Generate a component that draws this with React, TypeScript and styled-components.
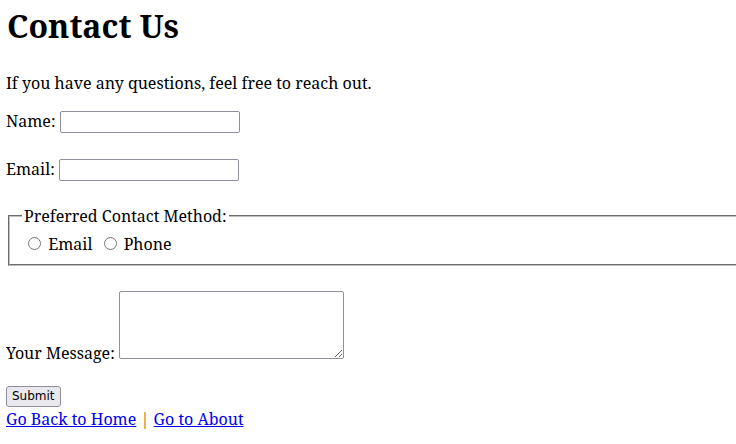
import React from "react";
import styled, { createGlobalStyle } from "styled-components";

const Global = createGlobalStyle`
  body {
    margin: 8px 0 8px 6px;
    font-family: "Noto Serif", "DejaVu Serif", serif;
    font-size: 16px;
    color: #000;
    background: #fff;
  }
`;

const Page = styled.main`
  display: block;
`;

const Title = styled.h1`
  font-size: 32px;
  font-weight: bold;
  margin: -4px 0 25px 1px;
`;

const Intro = styled.p`
  margin: 16px 0;
`;

const Form = styled.form`
  display: block;
`;

const Row = styled.div<{ $gap: number }>`
  margin-bottom: ${(p) => p.$gap}px;
`;

const TextInput = styled.input`
  box-sizing: border-box;
  width: 180px;
  height: 22px;
  border: 1px solid #8f8f9d;
  border-radius: 2px;
  padding: 1px 2px;
  font: 13.33px "Noto Sans", sans-serif;
  vertical-align: baseline;
  margin: 0;
`;

const Fieldset = styled.fieldset`
  margin: 0 0 0 2px;
  border: 2px groove #c0c0c0;
  border-right: 0;
  padding: 6px 0 9px 11px;
`;

const Legend = styled.legend`
  padding: 0 2px;
  margin-left: 1px;
`;

const Radio = styled.input`
  width: 13px;
  height: 13px;
  margin: 3px 3px 0 7px;
`;

const MessageRow = styled.div`
  margin-top: 25px;
  margin-bottom: 19px;
`;

const TextArea = styled.textarea`
  box-sizing: border-box;
  width: 225px;
  height: 68px;
  border: 1px solid #8f8f9d;
  border-radius: 2px;
  margin: 0;
  vertical-align: baseline;
`;

const Button = styled.button`
  box-sizing: border-box;
  height: 21px;
  font: 12px "DejaVu Sans", sans-serif;
  padding: 0 5px;
  border: 1px solid #8f8f9d;
  border-radius: 3px;
  background: #e9e9ed;
  color: #000;
  margin: 0;
`;

const Nav = styled.div`
  display: block;
  margin-top: 1px;
`;

const Link = styled.a`
  color: #0000ee;
  text-decoration: underline;
`;

const Sep = styled.span`
  color: #b06a20;
`;

export default function App() {
  return (
    <Page>
      <Global />
      <Title>Contact Us</Title>
      <Intro>If you have any questions, feel free to reach out.</Intro>
      <Form onSubmit={(e) => e.preventDefault()}>
        <Row $gap={25}>
          <label>
            Name: <TextInput type="text" />
          </label>
        </Row>
        <Row $gap={24}>
          <label>
            Email: <TextInput type="email" />
          </label>
        </Row>
        <Fieldset>
          <Legend>Preferred Contact Method:</Legend>
          <label>
            <Radio type="radio" name="method" /> Email
          </label>{" "}
          <label>
            <Radio type="radio" name="method" /> Phone
          </label>
        </Fieldset>
        <MessageRow>
          <label>
            Your Message: <TextArea />
          </label>
        </MessageRow>
        <Button type="submit">Submit</Button>
      </Form>
      <Nav>
        <Link href="#">Go Back to Home</Link> <Sep>|</Sep> <Link href="#">Go to About</Link>
      </Nav>
    </Page>
  );
}
